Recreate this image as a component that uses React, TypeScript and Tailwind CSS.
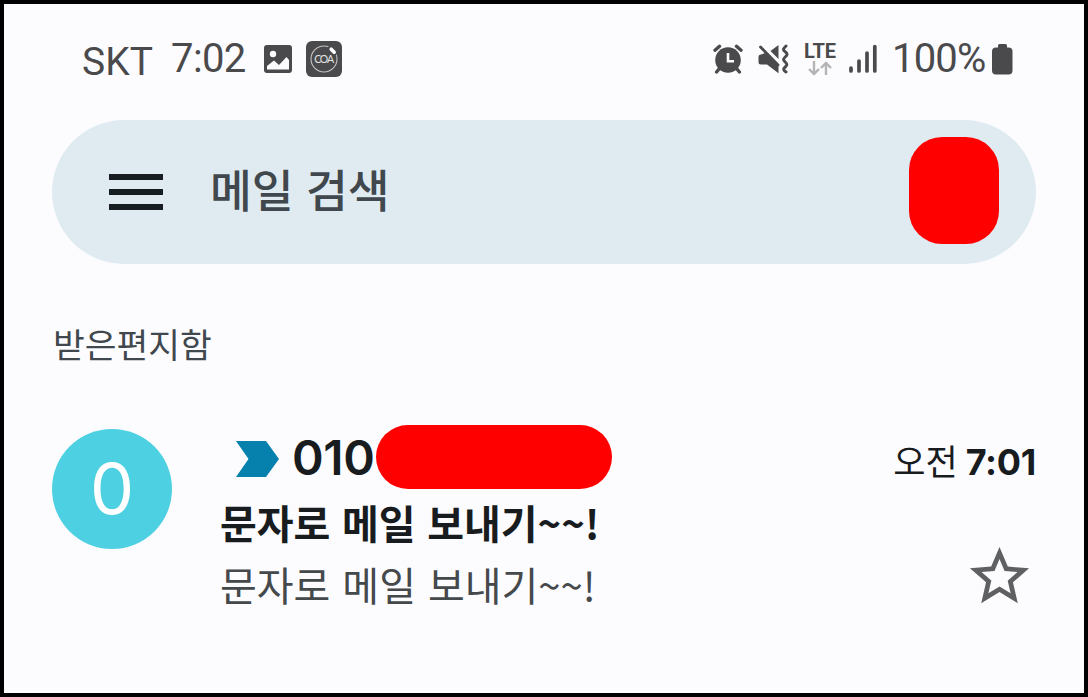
const korean = "font-['Noto_Sans_CJK_KR',sans-serif]";

function PictureIcon() {
  return (
    <svg width="28" height="28" viewBox="0 0 28 28" className="shrink-0">
      <rect width="28" height="28" rx="3" fill="#4a4a4c" />
      <circle cx="9" cy="9" r="3.2" fill="#fcfcff" />
      <path d="M3 24.500v-3.500l7-5.500 5 4.500 7.500-8 2.500 3v9.500z" fill="#fcfcff" />
    </svg>
  );
}

function CoaIcon() {
  return (
    <svg width="36" height="36" viewBox="0 0 36 36" className="shrink-0">
      <rect width="36" height="36" rx="6" fill="#4a4a4c" />
      <circle cx="18" cy="18" r="13" fill="none" stroke="#c4c4c6" strokeWidth="1.1" />
      <path d="M22 6l8 8" stroke="#4a4a4c" strokeWidth="6" />
      <path d="M25.200 8.200l3 3" stroke="#fff" strokeWidth="3.6" strokeLinecap="round" />
      <text x="17.500" y="21.600" textAnchor="middle" fontSize="10.5" letterSpacing="-1.2" fill="#e4e4e6" fontFamily="Lato, sans-serif">COA</text>
    </svg>
  );
}

function AlarmIcon() {
  return (
    <svg width="30" height="30" viewBox="0 0 30 30" className="shrink-0">
      <circle cx="15" cy="16" r="12.8" fill="#4a4a4c" />
      <path d="M2 6.200L6.500 2.300M28 6.200L23.500 2.300" stroke="#4a4a4c" strokeWidth="3.4" strokeLinecap="round" />
      <path d="M6 25l-2.400 3M24 25l2.400 3" stroke="#4a4a4c" strokeWidth="3.4" strokeLinecap="round" />
      <path d="M15 9v8.300h6" stroke="#fcfcff" strokeWidth="2.6" fill="none" />
    </svg>
  );
}

function MuteVibrateIcon() {
  return (
    <svg width="32" height="30" viewBox="0 0 32 30" className="shrink-0">
      <path d="M20.500 1v14L12.500 7zM7 9L20.500 22v7.300L9 20.500H3a2.500 2.500 0 0 1-2.500-2.500v-5A2.500 2.500 0 0 1 3 10.500z" fill="#4a4a4c" />
      <path d="M2.500 3l17.500 18" stroke="#4a4a4c" strokeWidth="2.8" strokeLinecap="round" />
      <path d="M28 2c-2.800 2.500-3.500 4-.8 5.800s2.200 3.200 0 5.200-2.200 3 0 5 2.200 3.200 0 5-2 3 .8 5" fill="none" stroke="#4a4a4c" strokeWidth="3" strokeLinecap="round" />
    </svg>
  );
}

function DataArrows() {
  return (
    <svg width="24" height="15" viewBox="0 0 24 15" fill="none" stroke="#b4b4b6" strokeWidth="2.4">
      <path d="M6 0v12.500M1 8l5 5 5-5M18 14V2M13 7l5-5 5 5" />
    </svg>
  );
}

function SignalIcon() {
  return (
    <svg width="28" height="30" viewBox="0 0 28 30" stroke="#4a4a4c" strokeWidth="3.7" strokeLinecap="round" className="shrink-0">
      <path d="M2 24v3M10 17v10M18 9v18M25.800 2.500v24.500" />
    </svg>
  );
}

function BatteryIcon() {
  return (
    <svg width="21" height="31" viewBox="0 0 21 31" fill="#4a4a4c" className="shrink-0">
      <rect x="6" width="9" height="8" rx="1.500" />
      <rect y="3.500" width="20.500" height="27" rx="4" />
    </svg>
  );
}

function StatusBar() {
  return (
    <div className="flex h-[110px] items-center justify-between pl-[78px] pr-[71px] font-[Roboto,sans-serif] text-[40px] leading-none text-[#4a4a4c]">
      <div className="flex items-center">
        <span className="mt-[6px] w-[89px] text-[39px]">SKT</span>
        <span className="w-[93px] tracking-[-0.6px]">7:02</span>
        <PictureIcon />
        <div className="ml-[14px]"><CoaIcon /></div>
      </div>
      <div className="flex items-center">
        <AlarmIcon />
        <div className="ml-[15px]"><MuteVibrateIcon /></div>
        <div className="ml-[13px] flex w-[34px] flex-col items-center">
          <span className="text-[20px] font-bold leading-[19px]">LTE</span>
          <DataArrows />
        </div>
        <div className="ml-[12px]"><SignalIcon /></div>
        <span className="ml-[15px] w-[100px] tracking-[-0.8px]">100%</span>
        <BatteryIcon />
      </div>
    </div>
  );
}

function SearchBar() {
  return (
    <div className="mx-[48px] mt-[6px] flex h-[144px] items-center rounded-full bg-[#e0ebf1] pl-[57px] pr-[37.5px]">
      <div className="flex w-[54px] flex-col gap-[9px]">
        <div className="h-[6px] bg-[#171d20]" />
        <div className="h-[6px] bg-[#171d20]" />
        <div className="h-[6px] bg-[#171d20]" />
      </div>
      <span className={`mb-[7px] ml-[47px] flex-1 text-[45.5px] font-medium leading-none text-[#41484d] [word-spacing:2px] ${korean}`}>메일 검색</span>
      <div className="mb-[3px] h-[107px] w-[90px] rounded-[33px] bg-[#ff0000]" />
    </div>
  );
}

function MailRow() {
  return (
    <div className="mt-[52px] flex pl-[48px] pr-[48px]">
      <div className="mt-[9px] flex h-[120px] w-[120px] shrink-0 items-center justify-center rounded-full bg-[#4dd0e1] font-[Inter,sans-serif] text-[70px] leading-none text-white">
        0
      </div>
      <div className="ml-[48px] flex-1">
        <div className="flex h-[72px] items-center pl-[16px]">
          <svg width="43" height="36" viewBox="0 0 43 36" className="mt-[6px]">
            <path d="M0 0h30l13 18-13 18H0l12.500-18z" fill="#0680ad" />
          </svg>
          <span className="ml-[13px] mt-[4px] w-[84px] whitespace-nowrap font-[Inter,sans-serif] text-[48px] font-semibold leading-none tracking-[-0.4px] text-[#191c1e]">010</span>
          <div className="mt-px h-[64px] w-[236px] rounded-full bg-[#ff0000]" />
        </div>
        <div className={`h-[62px] whitespace-nowrap text-[40px] font-bold leading-[61px] text-[#191c1e] [word-spacing:2.5px] ${korean}`}>문자로 메일 보내기~~!</div>
        <div className={`h-[62px] whitespace-nowrap text-[40px] leading-[61px] text-[#45494c] [word-spacing:3px] ${korean}`}>문자로 메일 보내기~~!</div>
      </div>
      <div className="flex flex-col items-end">
        <div className="mt-[20px] flex h-[44px] items-center whitespace-nowrap text-[#191c1e]">
          <span className={`mb-[5px] text-[35px] leading-none ${korean}`}>오전</span>
          <span className="ml-[8px] font-[Inter,sans-serif] text-[36px] font-bold leading-none tracking-[-0.3px]">7:01</span>
        </div>
        <svg width="71" height="71" viewBox="0 0 24 24" fill="#5f6062" className="mr-px mt-[57px]">
          <path d="M22 9.240l-7.190-.62L12 2 9.190 8.630 2 9.240l5.460 4.730L5.820 21 12 17.270 18.180 21l-1.630-7.030L22 9.240zM12 15.400l-3.760 2.270 1-4.280-3.320-2.880 4.380-.38L12 6.100l1.710 4.040 4.380.38-3.320 2.880 1 4.280L12 15.400z" />
        </svg>
      </div>
    </div>
  );
}

export default function App() {
  return (
    <div className="h-[697px] w-[1088px] overflow-hidden border-4 border-black bg-[#fcfcff]">
      <StatusBar />
      <SearchBar />
      <div className={`mt-[56px] h-[48px] pl-[49px] text-[34.5px] leading-[47px] text-[#41484d] ${korean}`}>받은편지함</div>
      <MailRow />
    </div>
  );
}
